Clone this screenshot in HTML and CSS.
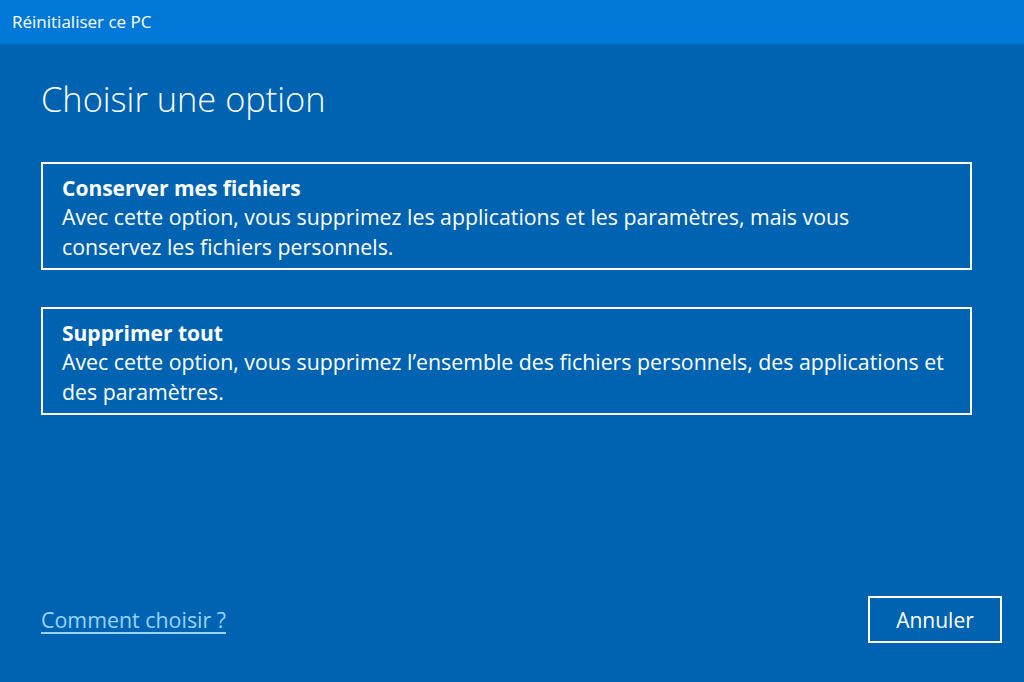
FILE: index.html
```html
<!DOCTYPE html>
<html lang="fr">
<head>
<meta charset="utf-8">
<title>Réinitialiser ce PC</title>
<link rel="stylesheet" href="styles.css">
</head>
<body>
<div class="window">
  <header class="titlebar">Réinitialiser ce PC</header>
  <main class="content">
    <h1 class="heading">Choisir une option</h1>
    <div class="options">
      <div class="option">
        <div class="option-title">Conserver mes fichiers</div>
        <div class="option-desc">Avec cette option, vous supprimez les applications et les paramètres, mais vous conservez les fichiers personnels.</div>
      </div>
      <div class="option">
        <div class="option-title">Supprimer tout</div>
        <div class="option-desc">Avec cette option, vous supprimez l’ensemble des fichiers personnels, des applications et des paramètres.</div>
      </div>
    </div>
    <footer class="footer">
      <a class="help-link" href="#">Comment choisir ?</a>
      <button class="cancel">Annuler</button>
    </footer>
  </main>
</div>
</body>
</html>
```
FILE: styles.css
```css
html, body {
  margin: 0;
  padding: 0;
  width: 1024px;
  height: 682px;
  overflow: hidden;
}
body {
  font-family: "Open Sans", "Noto Sans", sans-serif;
  color: #ffffff;
  background: #0063b1;
}
.window {
  display: flex;
  flex-direction: column;
  height: 682px;
}
.titlebar {
  height: 44px;
  background: #0078d7;
  font-size: 17px;
  line-height: 44px;
  padding-left: 12px;
  box-sizing: border-box;
}
.content {
  flex: 1;
  display: flex;
  flex-direction: column;
  padding: 0 22px 39px 41px;
}
.heading {
  margin: 33px 0 0 0;
  font-size: 34.4px;
  font-weight: 300;
  line-height: 44px;
}
.options {
  display: flex;
  flex-direction: column;
  gap: 37px;
  margin-top: 41px;
  width: 931px;
}
.option {
  border: 2px solid #ffffff;
  padding: 12px 24px 7px 19px;
  height: 108px;
  box-sizing: border-box;
}
.option-title {
  font-size: 21px;
  font-weight: 700;
  line-height: 24px;
}
.option-desc {
  margin-top: 2px;
  font-size: 21.3px;
  line-height: 30px;
}
.footer {
  margin-top: auto;
  display: flex;
  justify-content: space-between;
  align-items: center;
}
.help-link {
  color: #99d4ff;
  font-size: 21.4px;
  text-decoration: underline;
  text-underline-offset: 4px;
}
.cancel {
  width: 134px;
  height: 47px;
  border: 2px solid #ffffff;
  background: transparent;
  color: #ffffff;
  font-family: inherit;
  font-size: 21px;
}
```
